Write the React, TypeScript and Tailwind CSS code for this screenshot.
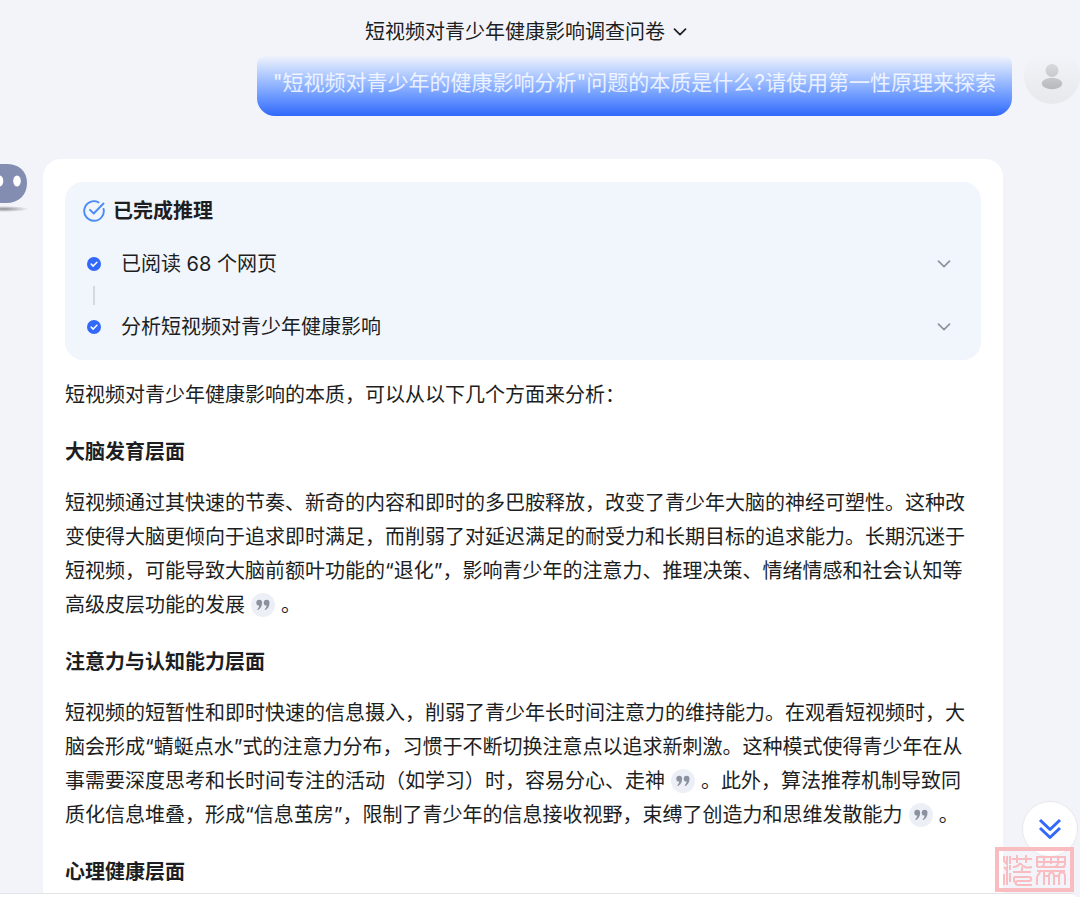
import { useState } from "react";
import type { ReactNode } from "react";

function Chevron({ className }: { className: string }) {
  return (
    <svg viewBox="0 0 14 8" fill="none" className={className}>
      <path d="M1.500 1.200 7 6.600l5.500-5.400" stroke="currentColor" strokeWidth="1.700" strokeLinecap="round" strokeLinejoin="round" />
    </svg>
  );
}

function RobotAvatar() {
  return (
    <svg viewBox="0 0 32 52" className="h-13 w-8 shrink-0">
      <defs>
        <radialGradient id="robotShadow">
          <stop offset="0" stopColor="#8f8f96" />
          <stop offset="1" stopColor="#8f8f96" stopOpacity="0" />
        </radialGradient>
      </defs>
      <ellipse cx="4" cy="45" rx="25" ry="3" fill="url(#robotShadow)" />
      <path d="M-4 0H6C19 0 27 7 27 19S19 39 6 39H-4Z" fill="#828db1" />
      <ellipse cx="-0.500" cy="17" rx="3.800" ry="5.500" fill="#fff" />
      <ellipse cx="17" cy="17" rx="3.800" ry="5.500" fill="#fff" />
    </svg>
  );
}

function UserAvatar() {
  return (
    <svg viewBox="0 0 56 56" className="-mt-2 size-14 shrink-0">
      <defs>
        <linearGradient id="userBg" x1="0" y1="0" x2="0" y2="1">
          <stop offset="0.1" stopColor="#f3f4f9" />
          <stop offset="1" stopColor="#e7e8ec" />
        </linearGradient>
        <linearGradient id="userHead" x1="0" y1="0" x2="0" y2="1">
          <stop offset="0" stopColor="#d8d9dc" />
          <stop offset="1" stopColor="#c9cacd" />
        </linearGradient>
        <linearGradient id="userBody" x1="0" y1="0" x2="0" y2="1">
          <stop offset="0" stopColor="#c8c9cd" />
          <stop offset="1" stopColor="#b7b8bd" />
        </linearGradient>
      </defs>
      <circle cx="28" cy="28" r="28" fill="url(#userBg)" />
      <circle cx="28" cy="22.500" r="6.500" fill="url(#userHead)" />
      <ellipse cx="28" cy="35.500" rx="10.300" ry="5.800" fill="url(#userBody)" />
    </svg>
  );
}

function StepRow({ label, open, onToggle }: { label: string; open: boolean; onToggle: () => void }) {
  return (
    <button type="button" aria-expanded={open} onClick={onToggle} className="flex h-8 w-full items-center gap-5 text-left">
      <svg viewBox="0 0 14 14" className="size-3.5 shrink-0">
        <circle cx="7" cy="7" r="7" fill="#3269fa" />
        <path d="m4.200 7.100 2 2 3.700-3.800" fill="none" stroke="#fff" strokeWidth="1.500" strokeLinecap="round" strokeLinejoin="round" />
      </svg>
      <span className="flex-1">{label}</span>
      <Chevron className={`h-2 w-3.5 text-[#8d949f] ${open ? "rotate-180" : ""}`} />
    </button>
  );
}

function Cite() {
  return (
    <button type="button" aria-label="引用" className="mx-1.5 mb-1 inline-flex size-6 items-center justify-center rounded-full bg-[#eceff6] align-middle">
      <svg viewBox="0 0 14 11" className="h-3 w-3.5" fill="#8b919e">
        <path d="M3.200.3A2.900 2.900 0 0 1 6.100 3.300c0 3.500-1.700 6-4 7.200-.6.300-1-.3-.6-.8.900-1.100 1.600-2.300 1.700-3.600A2.900 2.900 0 0 1 3.200.3Z" />
        <path d="M10.600.3a2.900 2.900 0 0 1 2.900 3c0 3.500-1.700 6-4 7.200-.6.300-1-.3-.6-.8.900-1.100 1.600-2.300 1.700-3.600a2.900 2.900 0 0 1 0-5.800Z" />
      </svg>
    </button>
  );
}

function Section({ title, children }: { title: string; children?: ReactNode }) {
  return (
    <section className="mt-[23px]">
      <h2 className="font-bold">{title}</h2>
      {children && <p className="mt-[17px] pr-2">{children}</p>}
    </section>
  );
}

function Seal() {
  return (
    <svg viewBox="0 0 79 45" className="h-[45px] w-[79px]" fill="none" stroke="#f9bcc0" strokeWidth="2">
      <rect x="2" y="2" width="75" height="41" strokeWidth="4" />
      {/* left mark */}
      <path d="M9 9v5l3 3v-8M15 9v8M9 20l3 3v-4M15 18v5M12 23v15M9 38V27M15 26v9" />
      <path d="M17 12h20M22 8v8M31 8v8M18 20c4 0 6-2 7-4M25 16c4 5 7 5 12 4" />
      <path d="M18 25h18M27 20v5M19 30h15c3 0 3 4 0 4H23c-3 0-3 4 0 4h14M19 30v4l3 4" />
      {/* right mark */}
      <path d="M42 20V10h28v7c0 2-2 3-4 3M49 10v7c0 2-3 3-5 3M56 10v7M63 10v6c0 2-2 4-4 4M42 15h28M42 20h28" />
      <path d="M42 24h28M45 24c0 4-3 3-3 7v7M49 24v14M54 38V29c0-5 5-5 5 0v9M64 38V29c0-5 6-5 6 0v9M49 29h5M59 29h5" />
    </svg>
  );
}

export default function App() {
  const [openStep, setOpenStep] = useState<number | null>(null);
  const toggle = (i: number) => setOpenStep(openStep === i ? null : i);

  return (
    <div className="flex h-screen flex-col overflow-hidden bg-[#f3f4fa] font-['Inter','Noto_Sans_CJK_SC',sans-serif] text-xl leading-[34px] text-[#1c1e22]">
      <header className="flex h-14 shrink-0 items-center justify-center pt-2 pr-7">
        <button type="button" className="flex items-center gap-2">
          短视频对青少年健康影响调查问卷
          <Chevron className="h-2 w-3.5" />
        </button>
      </header>

      <main className="min-h-0 flex-1 overflow-hidden">
        <div className="flex items-start justify-end gap-3">
          <p className="h-15 rounded-b-[18px] rounded-t-lg bg-linear-to-b from-[#f0f3fb] to-[#3067fa] px-4 pt-2.5 text-[21px] text-white/80">
            "短视频对青少年的健康影响分析"问题的本质是什么?请使用第一性原理来探索
          </p>
          <UserAvatar />
        </div>

        <div className="mt-[43px] flex items-start">
          <div className="w-[43px] shrink-0 pt-[5px]">
            <RobotAvatar />
          </div>
          <article className="mr-[77px] flex-1 rounded-t-[18px] bg-white px-[22px] pt-[23px] pb-6">
            <div className="rounded-[18px] bg-[#f1f5fc] pt-3 pr-7.5 pb-[17px] pl-[18px]">
              <h2 className="flex items-center gap-2 font-bold">
                <svg viewBox="0 0 22 22" fill="none" className="size-5.5" stroke="#4a8cf7" strokeWidth="1.900" strokeLinecap="round">
                  <path d="M15.500 2.300A9.800 9.800 0 1 0 20.600 9" />
                  <path d="m7 9.800 3.700 3.700 9.800-10" strokeLinejoin="round" />
                </svg>
                已完成推理
              </h2>
              <div className="mt-5 pl-1">
                <StepRow label="已阅读 68 个网页" open={openStep === 0} onToggle={() => toggle(0)} />
                <div className="my-1.5 ml-1.5 h-[19px] w-0.5 bg-[#d5d8df]" />
                <StepRow label="分析短视频对青少年健康影响" open={openStep === 1} onToggle={() => toggle(1)} />
              </div>
            </div>

            <p className="mt-[18px]">短视频对青少年健康影响的本质，可以从以下几个方面来分析：</p>

            <Section title="大脑发育层面">
              短视频通过其快速的节奏、新奇的内容和即时的多巴胺释放，改变了青少年大脑的神经可塑性。这种改变使得大脑更倾向于追求即时满足，而削弱了对延迟满足的耐受力和长期目标的追求能力。长期沉迷于短视频，可能导致大脑前额叶功能的“退化”，影响青少年的注意力、推理决策、情绪情感和社会认知等高级皮层功能的发展
              <Cite />。
            </Section>
            <Section title="注意力与认知能力层面">
              短视频的短暂性和即时快速的信息摄入，削弱了青少年长时间注意力的维持能力。在观看短视频时，大脑会形成“蜻蜓点水”式的注意力分布，习惯于不断切换注意点以追求新刺激。这种模式使得青少年在从事需要深度思考和长时间专注的活动（如学习）时，容易分心、走神
              <Cite />。此外，算法推荐机制导致同质化信息堆叠，形成“信息茧房”，限制了青少年的信息接收视野，束缚了创造力和思维发散能力
              <Cite />。
            </Section>
            <Section title="心理健康层面" />
          </article>
        </div>
      </main>

      <footer className="mr-1 h-1 shrink-0 rounded-tr-lg border-t border-[#e3e4e8] bg-white" />

      <button type="button" aria-label="回到底部" className="fixed right-0.5 bottom-10 flex size-14 items-center justify-center rounded-full border border-[#e6e7ea] bg-white">
        <svg viewBox="0 0 24 22" fill="none" className="h-5.5 w-6" stroke="#3269fa" strokeWidth="3" strokeLinejoin="round">
          <path d="m2 2 10 9.500L22 2M2 10l10 9.500L22 10" />
        </svg>
      </button>
      <div className="pointer-events-none fixed right-1.5 bottom-[5px]">
        <Seal />
      </div>
    </div>
  );
}
